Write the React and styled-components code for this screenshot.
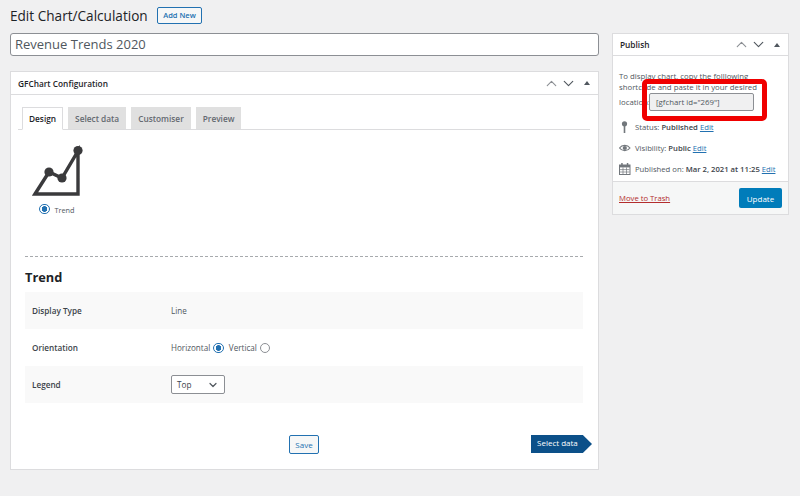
import styled, { createGlobalStyle } from 'styled-components'
import { ChevronUp, ChevronDown } from 'lucide-react'

const GlobalStyle = createGlobalStyle`
  html, body {
    margin: 0;
    padding: 0;
    background: #f0f0f1;
    font-family: "Open Sans", "Noto Sans", sans-serif;
    color: #3c434a;
  }
`

function BoxControls() {
  return (
    <Controls>
      <ChevronUp size={17} color='#8c8f94' strokeWidth={1.6} />
      <ChevronDown size={17} color='#50575e' strokeWidth={1.6} />
      <Caret />
    </Controls>
  )
}

function TrendIcon() {
  return (
    <svg width='52' height='54' viewBox='0 0 52 54'>
      <path
        d='M3 49 L17 27 L30 33 L46 6 L46 49 Z'
        fill='none'
        stroke='#3a3a3c'
        strokeWidth='3.4'
      />
      <circle cx='17' cy='27' r='4.6' fill='#3a3a3c' />
      <circle cx='30' cy='33' r='4.6' fill='#3a3a3c' />
      <circle cx='46' cy='5.5' r='4.6' fill='#3a3a3c' />
    </svg>
  )
}

function PinIcon() {
  return (
    <svg width='12' height='12' viewBox='0 0 12 12'>
      <circle cx='5.5' cy='2.8' r='2.6' fill='#72777c' />
      <rect x='4.7' y='4' width='1.6' height='8' fill='#72777c' />
    </svg>
  )
}

function EyeIcon() {
  return (
    <svg width='12' height='10' viewBox='0 0 12 10'>
      <path
        d='M0.5 5 C3 1.5 8.5 1.5 11 5 C8.5 8.5 3 8.5 0.5 5 Z'
        fill='none'
        stroke='#72777c'
        strokeWidth='1.1'
      />
      <circle cx='5.8' cy='5' r='2.1' fill='#72777c' />
    </svg>
  )
}

function CalendarIcon() {
  return (
    <svg width='12' height='12' viewBox='0 0 12 12'>
      <rect x='0.5' y='2' width='10.5' height='9.5' fill='none' stroke='#72777c' />
      <rect x='0.5' y='2' width='10.5' height='2.4' fill='#72777c' />
      <rect x='2.2' y='0' width='1.5' height='3' fill='#72777c' />
      <rect x='7.8' y='0' width='1.5' height='3' fill='#72777c' />
      <path d='M4 4.4 V11 M7.5 4.4 V11 M1 6.6 H10.5 M1 9 H10.5' stroke='#72777c' strokeWidth='0.7' />
    </svg>
  )
}

export default function App() {
  return (
    <Page>
      <GlobalStyle />
      <Heading>
        <Title>Edit Chart/Calculation</Title>
        <AddNew>Add New</AddNew>
      </Heading>

      <Columns>
        <Main>
          <TitleInput>Revenue Trends 2020</TitleInput>

          <ConfigBox>
            <BoxHeader>
              <BoxTitle>GFChart Configuration</BoxTitle>
              <BoxControls />
            </BoxHeader>

            <ConfigBody>
              <Tabs>
                <Tab $active>Design</Tab>
                <Tab>Select data</Tab>
                <Tab>Customiser</Tab>
                <Tab>Preview</Tab>
              </Tabs>

              <ChartChoice>
                <TrendIcon />
                <ChoiceLabel>
                  <RadioDot $checked />
                  <ChoiceText>Trend</ChoiceText>
                </ChoiceLabel>
              </ChartChoice>

              <Settings>
                <SectionTitle>Trend</SectionTitle>
                <SettingRow $shaded>
                  <SettingName>Display Type</SettingName>
                  <SettingValue>Line</SettingValue>
                </SettingRow>
                <SettingRow>
                  <SettingName>Orientation</SettingName>
                  <SettingValue>
                    Horizontal <OrientationRadio $checked />
                    <VerticalLabel>Vertical</VerticalLabel> <OrientationRadio />
                  </SettingValue>
                </SettingRow>
                <SettingRow $shaded>
                  <SettingName>Legend</SettingName>
                  <SettingValue>
                    <Select>
                      Top
                      <ChevronDown size={12} color='#50575e' strokeWidth={2.4} />
                    </Select>
                  </SettingValue>
                </SettingRow>
              </Settings>

              <Actions>
                <SaveButton>Save</SaveButton>
                <NextButton>Select data</NextButton>
              </Actions>
            </ConfigBody>
          </ConfigBox>
        </Main>

        <Sidebar>
          <BoxHeader $compact>
            <BoxTitle>Publish</BoxTitle>
            <BoxControls />
          </BoxHeader>
          <PublishBody>
            <Intro>
              To display chart, copy the folllowing shortcode and paste it in your desired
              <IntroLast>
                location:
                <ShortcodeField>[gfchart id="269"]</ShortcodeField>
              </IntroLast>
              <Highlight />
            </Intro>
            <MetaRow>
              <PinIcon />
              <span>
                Status: <b>Published</b> <MetaLink>Edit</MetaLink>
              </span>
            </MetaRow>
            <MetaRow>
              <EyeIcon />
              <span>
                Visibility: <b>Public</b> <MetaLink>Edit</MetaLink>
              </span>
            </MetaRow>
            <MetaRow>
              <CalendarIcon />
              <span>
                Published on: <b>Mar 2, 2021 at 11:25</b> <MetaLink>Edit</MetaLink>
              </span>
            </MetaRow>
          </PublishBody>
          <PublishFooter>
            <TrashLink>Move to Trash</TrashLink>
            <UpdateButton>Update</UpdateButton>
          </PublishFooter>
        </Sidebar>
      </Columns>
    </Page>
  )
}

const Page = styled.div`
  width: 800px;
  height: 496px;
  box-sizing: border-box;
  padding: 6px 11px 0 10px;
  overflow: hidden;
`

const Heading = styled.div`
  display: flex;
  align-items: center;
  gap: 9px;
  height: 19px;
  margin-bottom: 8px;
`

const Title = styled.h1`
  margin: 0;
  font-size: 13.6px;
  font-weight: 400;
  line-height: 19px;
  color: #1d2327;
`

const AddNew = styled.a`
  box-sizing: border-box;
  height: 17px;
  padding: 0 5.5px;
  border: 1px solid #2271b1;
  border-radius: 2px;
  background: #f6f7f7;
  color: #2271b1;
  font-size: 7.5px;
  font-weight: 600;
  line-height: 15px;
`

const Columns = styled.div`
  display: flex;
  align-items: flex-start;
  gap: 13px;
`

const Main = styled.div`
  width: 589px;
`

const TitleInput = styled.div`
  box-sizing: border-box;
  height: 23px;
  padding: 0 4px;
  border: 1px solid #8c8f94;
  border-radius: 3px;
  background: #fff;
  color: #50575e;
  font-size: 13px;
  line-height: 21px;
  margin-bottom: 15px;
`

const ConfigBox = styled.section`
  box-sizing: border-box;
  height: 399px;
  border: 1px solid #dcdcde;
  background: #fff;
`

const BoxHeader = styled.header`
  box-sizing: border-box;
  flex: none;
  display: flex;
  align-items: center;
  justify-content: space-between;
  height: ${(p) => (p.$compact ? '22px' : '23px')};
  padding: 0 8px 0 7px;
  border-bottom: 1px solid #dcdcde;
`

const BoxTitle = styled.h2`
  margin: 0;
  font-size: 8.3px;
  font-weight: 600;
  color: #1d2327;
`

const Controls = styled.div`
  display: flex;
  align-items: center;
`

const Caret = styled.span`
  width: 0;
  height: 0;
  margin-left: 7px;
  border-left: 3px solid transparent;
  border-right: 3px solid transparent;
  border-bottom: 4px solid #50575e;
`

const ConfigBody = styled.div`
  padding: 12px 8px 0 7px;
`

const Tabs = styled.div`
  display: flex;
  align-items: flex-end;
  gap: 5px;
  height: 23px;
  box-sizing: border-box;
  padding-left: 4px;
  border-bottom: 1px solid #dcdcde;
`

const Tab = styled.div`
  box-sizing: border-box;
  height: ${(p) => (p.$active ? '23px' : '22px')};
  margin-bottom: ${(p) => (p.$active ? '-1px' : '0')};
  padding: 0 6px;
  border: 1px solid ${(p) => (p.$active ? '#dcdcde' : '#e0e0e0')};
  border-bottom: ${(p) => (p.$active ? '1px solid #fff' : '0')};
  background: ${(p) => (p.$active ? '#fff' : '#e0e0e0')};
  color: ${(p) => (p.$active ? '#1d2327' : '#646970')};
  font-size: 8.3px;
  font-weight: 600;
  line-height: 21px;
`

const ChartChoice = styled.div`
  box-sizing: border-box;
  display: flex;
  flex-direction: column;
  align-items: flex-start;
  gap: 4px;
  width: 558px;
  height: 127px;
  margin-left: 7px;
  padding: 15px 0 0 7px;
  border-bottom: 1px dashed #a7aaad;
`

const ChoiceLabel = styled.label`
  display: flex;
  align-items: center;
  gap: 5px;
  margin-left: 7px;
  font-size: 7.3px;
  color: #50575e;
`

const ChoiceText = styled.span`
  padding-top: 2px;
`

const RadioDot = styled.span`
  display: inline-block;
  box-sizing: border-box;
  width: 10.5px;
  height: 10.5px;
  border: 1px solid ${(p) => (p.$checked ? '#2271b1' : '#8c8f94')};
  border-radius: 50%;
  background: ${(p) =>
    p.$checked ? 'radial-gradient(circle, #2271b1 0 2.6px, #fff 3px)' : '#fff'};
  vertical-align: -2px;
`

const OrientationRadio = styled(RadioDot)`
  margin-left: 1px;
`

const Settings = styled.div`
  width: 558px;
  margin-left: 7px;
`

const SectionTitle = styled.h3`
  box-sizing: border-box;
  height: 35px;
  margin: 0;
  padding-top: 11px;
  font-size: 12.8px;
  font-weight: 700;
  line-height: 18px;
  color: #1d2327;
`

const SettingRow = styled.div`
  display: flex;
  align-items: center;
  height: 37px;
  padding-left: 7px;
  background: ${(p) => (p.$shaded ? '#f9f9f9' : '#fff')};
`

const SettingName = styled.div`
  width: 139px;
  font-size: 8.2px;
  font-weight: 600;
  color: #3c434a;
`

const SettingValue = styled.div`
  font-size: 8.1px;
  color: #50575e;
`

const VerticalLabel = styled.span`
  margin-left: 5px;
`

const Select = styled.div`
  display: flex;
  align-items: center;
  justify-content: space-between;
  box-sizing: border-box;
  width: 54px;
  height: 19px;
  padding: 0 5px;
  border: 1px solid #8c8f94;
  border-radius: 2px;
  background: #fff;
  font-size: 8.2px;
  color: #3c434a;
`

const Actions = styled.div`
  display: flex;
  align-items: flex-start;
  justify-content: space-between;
  margin: 32px -2px 0 0;
  padding-left: 271px;
`

const SaveButton = styled.button`
  box-sizing: border-box;
  width: 30px;
  height: 19px;
  padding: 0;
  border: 1px solid #2271b1;
  border-radius: 2px;
  background: #f6f7f7;
  color: #2271b1;
  font-family: inherit;
  font-size: 8px;
`

const NextButton = styled.button`
  box-sizing: border-box;
  width: 61px;
  height: 18px;
  padding: 0 0 3px 6px;
  border: 0;
  background: #0c5089;
  clip-path: polygon(0 0, 85% 0, 100% 50%, 85% 100%, 0 100%);
  color: #fff;
  font-family: inherit;
  font-size: 8px;
  font-weight: 500;
  text-align: left;
`

const Sidebar = styled.aside`
  box-sizing: border-box;
  display: flex;
  flex-direction: column;
  width: 177px;
  height: 182px;
  border: 1px solid #dcdcde;
  background: #fff;
`

const PublishBody = styled.div`
  flex: 1;
  padding: 15px 6px 0;
`

const Intro = styled.div`
  position: relative;
  margin-bottom: 5px;
  font-size: 7.8px;
  line-height: 11px;
  color: #50575e;
`

const IntroLast = styled.div`
  display: flex;
  align-items: center;
  height: 18px;
`

const ShortcodeField = styled.div`
  box-sizing: border-box;
  width: 105px;
  height: 18px;
  margin-left: -1px;
  padding-left: 6px;
  border: 1px solid #8c8f94;
  border-radius: 2px;
  background: #f0f0f1;
  font-size: 7.8px;
  line-height: 16px;
`

const Highlight = styled.span`
  position: absolute;
  left: 23px;
  top: 8px;
  box-sizing: border-box;
  width: 125px;
  height: 42px;
  border: 5px solid #f00000;
  border-radius: 5px;
`

const MetaRow = styled.div`
  display: flex;
  align-items: center;
  gap: 4px;
  height: 21px;
  font-size: 7.7px;
  white-space: nowrap;
  color: #50575e;

  & > svg {
    flex: none;
  }

  b {
    font-weight: 600;
    color: #3c434a;
  }
`

const MetaLink = styled.a`
  color: #2271b1;
  text-decoration: underline;
`

const PublishFooter = styled.footer`
  box-sizing: border-box;
  flex: none;
  display: flex;
  align-items: center;
  justify-content: space-between;
  height: 33px;
  padding: 0 6px;
  border-top: 1px solid #dcdcde;
  background: #f6f7f7;
`

const TrashLink = styled.a`
  color: #b32d2e;
  font-size: 7.7px;
  text-decoration: underline;
`

const UpdateButton = styled.button`
  box-sizing: border-box;
  width: 43px;
  height: 20px;
  padding: 0;
  border: 0;
  border-radius: 2px;
  background: #007cba;
  color: #fff;
  font-family: inherit;
  font-size: 8px;
  font-weight: 500;
`
